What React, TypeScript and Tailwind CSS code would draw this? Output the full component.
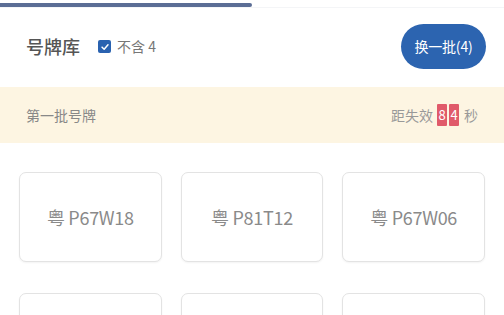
const PLATES = ["粤 P67W18", "粤 P81T12", "粤 P67W06", "", "", ""];

export default function App() {
  return (
    <div
      className="w-[504px] h-[315px] overflow-hidden bg-white"
      style={{ fontFamily: '"Noto Sans CJK SC", "Noto Sans", sans-serif' }}
    >
      {/* progress */}
      <div className="pt-[3px] h-[8px] bg-white border-b border-[#f4f5f7]">
        <div className="w-[252px] h-[4px] bg-[#5b6d95] rounded-r-full" />
      </div>

      {/* header */}
      <div className="flex items-center justify-between h-[79px] pl-[26px] pr-[18px] pb-[2px]">
        <div className="flex items-center">
          <span className="text-[18px] text-[#555] font-medium">号牌库</span>
          <span className="ml-[18px] flex items-center">
            <span className="w-[13px] h-[13px] rounded-[2px] bg-[#2a62b0] flex items-center justify-center">
              <svg viewBox="0 0 12 12" className="w-[10px] h-[10px]">
                <path d="M2.5 6.2 L5 8.6 L9.6 3.4" fill="none" stroke="white" strokeWidth="1.8" strokeLinecap="round" strokeLinejoin="round" />
              </svg>
            </span>
            <span className="ml-[6px] text-[14px] text-[#777]">不含 4</span>
          </span>
        </div>
        <button className="h-[45px] w-[85px] rounded-full bg-[#2c64b0] text-white text-[14px] tracking-[-0.2px]">
          换一批(4)
        </button>
      </div>

      {/* batch band */}
      <div className="flex items-center justify-between h-[56px] bg-[#fdf5e2] pl-[26px] pr-[26px]">
        <span className="text-[14px] text-[#888]">第一批号牌</span>
        <div className="flex items-center text-[14px] text-[#999]">
          <span>距失效</span>
          <span className="ml-[4px] w-[10px] h-[22px] bg-[#e05a6a] text-white text-[13px] flex items-center justify-center rounded-[1px]">8</span>
          <span className="ml-[2px] w-[10px] h-[22px] bg-[#e05a6a] text-white text-[13px] flex items-center justify-center rounded-[1px]">4</span>
          <span className="ml-[5px]">秒</span>
        </div>
      </div>

      {/* plates */}
      <div className="grid grid-cols-3 gap-x-[19px] gap-y-[31px] px-[19px] pt-[29px]">
        {PLATES.map((p, i) => (
          <div
            key={i}
            className="h-[90px] rounded-[7px] border border-[#e3e3e3] bg-white shadow-[0_1px_2px_rgba(0,0,0,0.05)] flex items-center justify-center text-[18px] text-[#8a8a8a] tracking-[-0.3px]"
          >
            {p}
          </div>
        ))}
      </div>
    </div>
  );
}
